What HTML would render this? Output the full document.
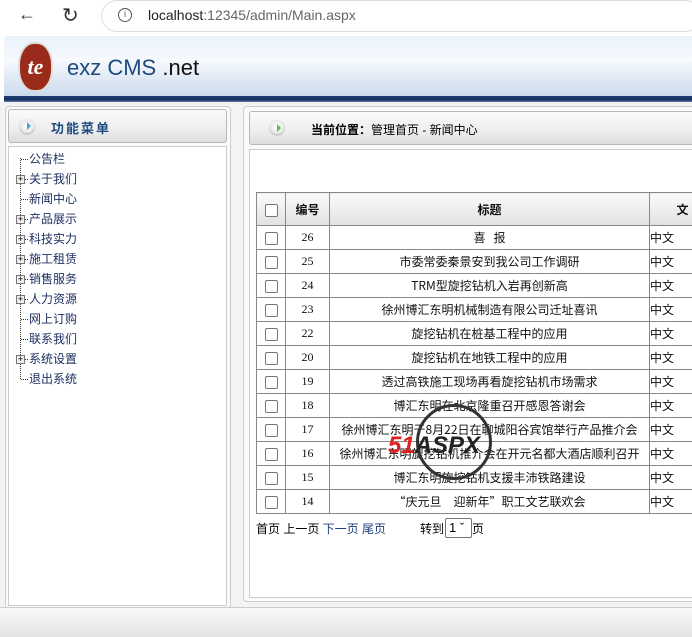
<!DOCTYPE html>
<html><head><meta charset="utf-8"><style>
*{margin:0;padding:0;box-sizing:border-box}
body{width:692px;height:637px;overflow:hidden;background:#fff;font-family:"Liberation Sans","Noto Sans CJK SC",sans-serif;font-size:12px;position:relative}
.abs{position:absolute}
.chrome{left:0;top:0;width:692px;height:36px;background:#fff}
.url{left:101px;top:0;width:600px;height:32px;border:1px solid #ddd;border-radius:16px;background:#fff}
.hdr{left:4px;top:36px;width:688px;height:61px;background:linear-gradient(#eaf2fb,#f6f9fd 40%,#c9daec);border-radius:4px 0 0 0}
.bar{left:4px;top:96px;width:688px;height:6px;background:linear-gradient(#1c3e74,#16305e 60%,#5c78a8)}
.ttl{background:linear-gradient(#fbfbfb,#eee 60%,#ddd);border:1px solid #b8b8b8;border-radius:3px}
.btn{width:14px;height:14px;border-radius:7px;background:radial-gradient(#fff,#ddd);box-shadow:0 1px 2px #aaa}
.tree div{height:20px;line-height:20px;color:#1c2e5e;font-size:12px;position:relative;padding-left:29px}
.tree div:before{content:"";position:absolute;left:21px;top:10px;width:7px;border-top:1px dotted #333}
.pl{position:absolute;left:16px;top:6px;width:9px;height:9px;border:1px solid #777;background:#eee;font-size:9px;line-height:7px;text-align:center;color:#000;z-index:1}
table{border-collapse:collapse;font-size:12px}
td,th{border:1px solid #888;height:24px;text-align:center;font-family:"Noto Sans CJK SC",sans-serif;color:#111}
th{height:33px;background:linear-gradient(#fbfbfb,#eee 50%,#e2e2e2);font-weight:bold}
.cb{display:inline-block;width:13px;height:13px;border:1px solid #777;border-radius:2px;background:#fff;vertical-align:middle}
td.l{text-align:left}
td.n{font-family:"Liberation Serif",serif}
</style></head><body>
<div class="abs chrome"></div>
<div class="abs" style="left:18px;top:4px;font-size:18px;color:#333">&#8592;</div>
<div class="abs" style="left:62px;top:3px;font-size:20px;color:#333">&#8635;</div>
<div class="abs url"></div>
<div class="abs" style="left:118px;top:8px;width:14px;height:14px;border:1.5px solid #555;border-radius:50%;font-size:9px;text-align:center;line-height:11px;color:#555">i</div>
<div class="abs" style="left:148px;top:7px;font-size:14px;color:#222">localhost<span style="color:#666">:12345/admin/Main.aspx</span></div>
<div class="abs hdr"></div>
<div class="abs" style="left:18px;top:42px;width:35px;height:50px;border-radius:45%;background:#9a2a1a;border:2px solid #ddd;color:#fff;font:italic bold 22px 'Liberation Serif',serif;text-align:center;line-height:46px">te</div>
<div class="abs" style="left:67px;top:55px;font-size:22px;color:#1e4a80">exz CMS <span style="color:#111">.net</span></div>
<div class="abs bar"></div>
<div class="abs" style="left:0;top:102px;width:692px;height:520px;background:#f3f3f3"></div>
<div class="abs" style="left:5px;top:106px;width:226px;height:503px;border:1px solid #ccc;border-radius:4px;background:#fafafa"></div>
<div class="abs ttl" style="left:8px;top:109px;width:219px;height:34px"></div>
<div class="abs btn" style="left:20px;top:119px"></div>
<div class="abs" style="left:27px;top:122px;width:0;height:0;border-left:4px solid #4aa3e0;border-top:4px solid transparent;border-bottom:4px solid transparent"></div>
<div class="abs" style="left:51px;top:118px;font-weight:bold;color:#1e4a80;font-size:13px;letter-spacing:2px">功能菜单</div>
<div class="abs" style="left:8px;top:146px;width:219px;height:460px;border:1px solid #ccc;background:#fff"></div>
<div class="abs" style="left:20px;top:158px;height:221px;border-left:1px dotted #333"></div>
<div class="abs tree" style="left:0;top:149px;width:220px">
<div>公告栏</div><div><span class="pl">+</span>关于我们</div><div>新闻中心</div><div><span class="pl">+</span>产品展示</div><div><span class="pl">+</span>科技实力</div><div><span class="pl">+</span>施工租赁</div><div><span class="pl">+</span>销售服务</div><div><span class="pl">+</span>人力资源</div><div>网上订购</div><div>联系我们</div><div><span class="pl">+</span>系统设置</div><div>退出系统</div>
</div>
<div class="abs" style="left:243px;top:106px;width:460px;height:496px;border:1px solid #ccc;border-radius:4px;background:#fafafa"></div>
<div class="abs ttl" style="left:249px;top:111px;width:450px;height:34px"></div>
<div class="abs btn" style="left:270px;top:120px"></div>
<div class="abs" style="left:277px;top:124px;width:0;height:0;border-left:4px solid #5bbf4a;border-top:4px solid transparent;border-bottom:4px solid transparent"></div>
<div class="abs" style="left:311px;top:121px;color:#000"><b>当前位置：</b>管理首页 - 新闻中心</div>
<div class="abs" style="left:249px;top:149px;width:450px;height:449px;border:1px solid #ccc;background:#fff"></div>
<table class="abs" style="left:256px;top:192px;width:460px">
<tr><th style="width:29px"><span class="cb"></span></th><th style="width:44px">编号</th><th style="width:320px">标题</th><th>文</th></tr>
<tr><td><span class="cb"></span></td><td class="n">26</td><td>喜&nbsp;&nbsp;&nbsp;报</td><td class="l">中文</td></tr>
<tr><td><span class="cb"></span></td><td class="n">25</td><td>市委常委秦景安到我公司工作调研</td><td class="l">中文</td></tr>
<tr><td><span class="cb"></span></td><td class="n">24</td><td>TRM型旋挖钻机入岩再创新高</td><td class="l">中文</td></tr>
<tr><td><span class="cb"></span></td><td class="n">23</td><td>徐州博汇东明机械制造有限公司迁址喜讯</td><td class="l">中文</td></tr>
<tr><td><span class="cb"></span></td><td class="n">22</td><td>旋挖钻机在桩基工程中的应用</td><td class="l">中文</td></tr>
<tr><td><span class="cb"></span></td><td class="n">20</td><td>旋挖钻机在地铁工程中的应用</td><td class="l">中文</td></tr>
<tr><td><span class="cb"></span></td><td class="n">19</td><td>透过高铁施工现场再看旋挖钻机市场需求</td><td class="l">中文</td></tr>
<tr><td><span class="cb"></span></td><td class="n">18</td><td>博汇东明在北京隆重召开感恩答谢会</td><td class="l">中文</td></tr>
<tr><td><span class="cb"></span></td><td class="n">17</td><td>徐州博汇东明于8月22日在聊城阳谷宾馆举行产品推介会</td><td class="l">中文</td></tr>
<tr><td><span class="cb"></span></td><td class="n">16</td><td>徐州博汇东明旋挖钻机推介会在开元名都大酒店顺利召开</td><td class="l">中文</td></tr>
<tr><td><span class="cb"></span></td><td class="n">15</td><td>博汇东明旋挖钻机支援丰沛铁路建设</td><td class="l">中文</td></tr>
<tr><td><span class="cb"></span></td><td class="n">14</td><td>“庆元旦　迎新年”职工文艺联欢会</td><td class="l">中文</td></tr>
</table>
<div class="abs" style="left:416px;top:404px;width:76px;height:76px;border:3px solid #333;border-radius:50%"></div>
<div class="abs" style="left:388px;top:432px;font:italic bold 24px 'Liberation Sans',sans-serif;color:#e02020">51<span style="color:#222">ASPX</span></div>
<div class="abs" style="left:256px;top:520px;color:#000">首页 上一页 <span style="color:#1e3e78">下一页 尾页</span></div>
<div class="abs" style="left:420px;top:520px;color:#000">转到</div>
<div class="abs" style="left:445px;top:518px;width:27px;height:20px;border:1px solid #777;border-radius:2px;background:#fff;font-size:13px;padding-left:3px;line-height:18px">1 &#711;</div>
<div class="abs" style="left:472px;top:520px">页</div>
<div class="abs" style="left:0;top:607px;width:692px;height:30px;background:linear-gradient(#fafafa,#eee 50%,#e2e2e2);border-top:1px solid #ccc"></div>
</body></html>
